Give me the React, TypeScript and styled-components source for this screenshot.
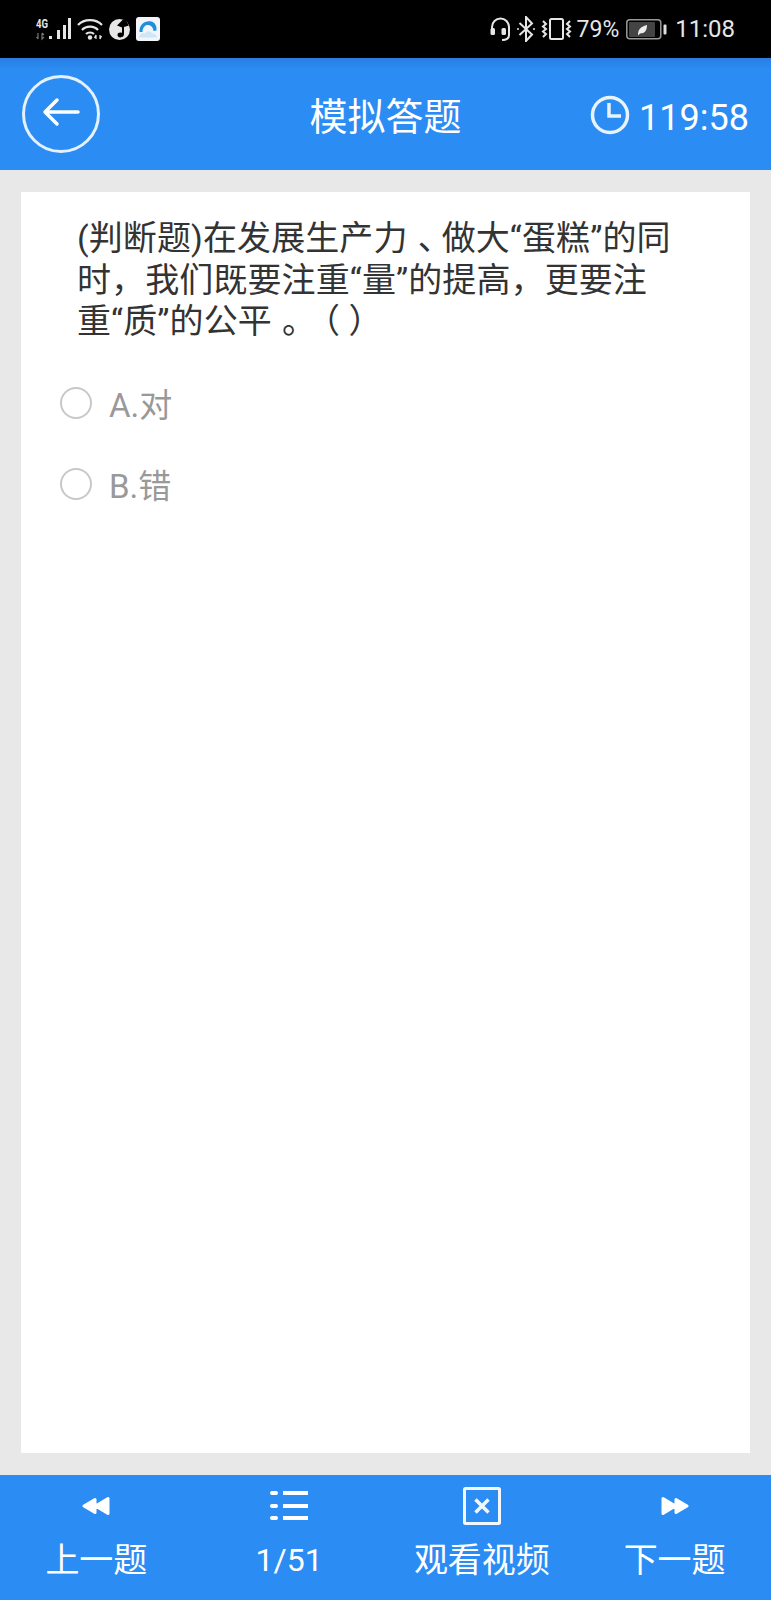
import styled, { createGlobalStyle } from "styled-components";

const BLUE = "#2b8cf3";
const CJK = `Roboto, "Noto Sans CJK SC", sans-serif`;

const GlobalStyle = createGlobalStyle`
  html, body {
    margin: 0;
    padding: 0;
    background: #e8e8e8;
    font-family: ${CJK};
  }
  * {
    box-sizing: border-box;
  }
`;

const Page = styled.div`
  width: 771px;
  height: 1600px;
  display: flex;
  flex-direction: column;
`;

const StatusBar = styled.div`
  height: 58px;
  flex: none;
  background: #000;
  color: #e6e6e6;
  display: flex;
  align-items: center;
  justify-content: space-between;
  padding: 0 36px 0 36px;
`;

const StatusGroup = styled.div`
  display: flex;
  align-items: center;
  gap: 6px;
`;

const Percent = styled.span`
  font-size: 23px;
  margin: 0 1px 0 -1px;
`;

const Clock = styled.span`
  font-size: 24px;
  margin-left: 2px;
`;

const Header = styled.header`
  height: 112px;
  flex: none;
  background: linear-gradient(#2a7ee2, ${BLUE} 12px);
  color: #fff;
  display: grid;
  grid-template-columns: 1fr auto 1fr;
  align-items: center;
  padding: 0 22px;
`;

const BackButton = styled.button`
  width: 78px;
  height: 78px;
  padding: 0 0 4px;
  border: 3px solid #e4f1fe;
  border-radius: 50%;
  background: none;
  color: #fff;
  display: flex;
  align-items: center;
  justify-content: center;
`;

const Title = styled.h1`
  margin: 0;
  padding-top: 6px;
  font-size: 38px;
  line-height: 1;
  font-weight: 400;
`;

const Timer = styled.div`
  justify-self: end;
  display: flex;
  align-items: center;
  gap: 9px;
  font-size: 36px;
  padding-top: 2px;
`;

const TimerText = styled.span`
  padding-top: 5px;
`;

const Body = styled.main`
  flex: 1;
  display: flex;
  padding: 22px 21px;
  min-height: 0;
`;

const Card = styled.section`
  flex: 1;
  background: #fff;
  padding: 26px 56px;
`;

const Question = styled.p`
  margin: 0 0 20px;
  color: #333;
  font-size: 34px;
  line-height: 41.500px;
  letter-spacing: 0.1px;
  text-spacing-trim: space-all;
`;

/* the 、 and 。 sit in the middle of their em box on the device */
const CenteredMark = styled.span`
  font-feature-settings: "halt";
  padding: 0 0.2em 0 0.3em;
`;

const Option = styled.label`
  height: 81px;
  margin-left: -17px;
  display: flex;
  align-items: center;
  gap: 17px;
  color: #999;
  font-size: 33px;
`;

const Radio = styled.span`
  width: 32px;
  height: 32px;
  flex: none;
  border: 2px solid #c8c8c8;
  border-radius: 50%;
  margin-top: -1px;
`;

const Footer = styled.footer`
  height: 125px;
  flex: none;
  background: ${BLUE};
  color: #fff;
  display: grid;
  grid-template-columns: repeat(4, 1fr);
`;

const FooterItem = styled.div`
  display: flex;
  flex-direction: column;
  align-items: center;
  padding-top: 11px;
`;

const FooterIcon = styled.div`
  height: 40px;
  display: flex;
  align-items: center;
  justify-content: center;
`;

const FooterLabel = styled.span<{ $small?: boolean }>`
  margin-top: 12px;
  font-size: ${(props) => (props.$small ? "32px" : "34px")};
  line-height: 44px;
  white-space: nowrap;
`;

const Signal = () => (
  <svg width="35" height="24" viewBox="0 0 35 24" fill="#e6e6e6">
    <rect x="13" y="19" width="3" height="3" />
    <rect x="21" y="13" width="3" height="9" />
    <rect x="27" y="8" width="3" height="14" />
    <rect x="32" y="1" width="3" height="21" />
    <text x="0" y="11" fontSize="13" fontWeight="700" fontFamily="Roboto" textLength="12" lengthAdjust="spacingAndGlyphs">
      4G
    </text>
    <path d="M2 16v6M0.500 20l1.500 2M6 16v6l2-2M6 16l2 2" fill="none" stroke="#777" strokeWidth="1.200" />
  </svg>
);

const Wifi = () => (
  <svg width="26" height="24" viewBox="0 0 26 24" fill="none" stroke="#e6e6e6" strokeWidth="2.200">
    <path d="M1 8C7 1.500 19 1.500 25 8" />
    <path d="M5 13C9 8.500 17 8.500 21 13" />
    <path d="M9 17c2-2 6-2 8 0" />
    <circle cx="13" cy="20.500" r="2.200" fill="#e6e6e6" stroke="none" />
    <path d="M19 22v-4l-1.500 3M23 18v4l1.500-3" strokeWidth="1.200" />
  </svg>
);

const Globe = () => (
  <svg width="21" height="21" viewBox="0 0 21 21">
    <circle cx="10.500" cy="10.500" r="10.500" fill="#e6e6e6" />
    <path d="M14 0.500 8 6.500l5 2v5.500c-1.500-1-4.500-.5-4.500 2S12 19.500 14.500 17c.5-1 .5-2 .5-3V8l5-1.500-3-5z" fill="#000" />
  </svg>
);

const CloudApp = () => (
  <svg width="24" height="24" viewBox="0 0 24 24">
    <rect width="24" height="24" rx="3" fill="#f2f6fa" />
    <path d="M3.500 15C3 6.500 10 3 15.500 4.500c3.500 1 5.500 4.500 5 9l-3 .5C17 8.500 11.500 6.500 8.500 9.500 7 11 6.500 13 6.500 15z" fill="#1f8fdc" />
    <path d="M3 20.500c0-4 4-5 6-4 1-3 6-3 7 0 2 0 5 1 5 4z" fill="#cfe6f7" />
  </svg>
);

const Headset = () => (
  <svg width="21" height="24" viewBox="0 0 21 24" fill="none" stroke="#e6e6e6" strokeWidth="2">
    <path d="M2 13V10a8.500 8.500 0 0 1 17 0v8c0 3-2 5-7 5" />
    <rect x="0.500" y="11" width="4.500" height="7" rx="1.500" fill="#e6e6e6" stroke="none" />
    <rect x="11.500" y="11" width="4.500" height="7" rx="1.500" fill="#e6e6e6" stroke="none" />
  </svg>
);

const Bluetooth = () => (
  <svg width="18" height="26" viewBox="0 0 18 26" fill="none" stroke="#e6e6e6" strokeWidth="2">
    <path d="M2.500 7 15 18.500 9 25V1l6 6.500L2.500 19" />
    <circle cx="1" cy="13" r="1" fill="#e6e6e6" stroke="none" />
    <circle cx="17" cy="13" r="1" fill="#e6e6e6" stroke="none" />
  </svg>
);

const Vibrate = () => (
  <svg width="31" height="22" viewBox="0 0 31 22" fill="none" stroke="#e6e6e6" strokeWidth="2">
    <rect x="9" y="1" width="13" height="20" rx="1.500" />
    <path d="M2 3l3 3-3 2.500 3 2.500-3 2.500 3 2.500-3 3M29 3l-3 3 3 2.500-3 2.500 3 2.500-3 2.500 3 3" />
  </svg>
);

const Battery = () => (
  <svg width="41" height="21" viewBox="0 0 41 21">
    <rect x="0.800" y="0.800" width="34" height="19" rx="3" fill="none" stroke="#999" strokeWidth="1.500" />
    <rect x="3" y="3" width="26" height="15" rx="1" fill="#444" />
    <rect x="37.500" y="5.500" width="3" height="10" rx="1" fill="#ddd" />
    <path d="M12 15.500c0-6 4-8 9-9.500 0 5-2 8.500-7 8.500l-2 2z" fill="#eee" />
  </svg>
);

const BackArrow = () => (
  <svg width="38" height="30" viewBox="0 0 38 30" fill="none" stroke="#fff" strokeWidth="3.500" strokeLinecap="round" strokeLinejoin="round">
    <path d="M36 15H3M15 3 3 15l12 12" />
  </svg>
);

const TimerIcon = () => (
  <svg width="40" height="40" viewBox="0 0 40 40" fill="none" stroke="#e8f3fe" strokeWidth="3.500">
    <circle cx="20" cy="20" r="17.500" />
    <path d="M19 8v13h12" />
  </svg>
);

const Rewind = ({ flip }: { flip?: boolean }) => (
  <svg
    width="28"
    height="20"
    viewBox="0 0 28 20"
    fill="#fff"
    stroke="#fff"
    strokeWidth="3"
    strokeLinejoin="round"
    transform={flip ? "scale(-1 1)" : undefined}
  >
    <path d="M2 10 13 3.500v13zM13.500 10 26 2.500v15z" />
  </svg>
);

const ListIcon = () => (
  <svg width="38" height="34" viewBox="0 0 38 34" fill="#fff">
    <rect x="0" y="2" width="8" height="4" rx="2" />
    <rect x="0" y="15" width="8" height="4" rx="2" />
    <rect x="0" y="27" width="8" height="4" rx="2" />
    <rect x="13" y="2" width="25" height="4" />
    <rect x="13" y="15" width="25" height="4" />
    <rect x="13" y="27" width="25" height="4" />
  </svg>
);

const VideoIcon = () => (
  <svg width="38" height="38" viewBox="0 0 38 38" fill="none" stroke="#f2f8ff">
    <rect x="1.500" y="1.500" width="35" height="35" rx="1" strokeWidth="3" />
    <path d="M12.500 12.500l13 13M25.500 12.500l-13 13" strokeWidth="3.500" />
  </svg>
);

const App = () => {
  return (
    <Page>
      <GlobalStyle />
      <StatusBar>
        <StatusGroup>
          <Signal />
          <Wifi />
          <Globe />
          <CloudApp />
        </StatusGroup>
        <StatusGroup>
          <Headset />
          <Bluetooth />
          <Vibrate />
          <Percent>79%</Percent>
          <Battery />
          <Clock>11:08</Clock>
        </StatusGroup>
      </StatusBar>
      <Header>
        <BackButton aria-label="返回">
          <BackArrow />
        </BackButton>
        <Title>模拟答题</Title>
        <Timer>
          <TimerIcon />
          <TimerText>119:58</TimerText>
        </Timer>
      </Header>
      <Body>
        <Card>
          <Question>
            (判断题)在发展生产力<CenteredMark>、</CenteredMark>做大“蛋糕”的同时，我们既要注重“量”的提高，更要注重“质”的公平<CenteredMark>。</CenteredMark>（ ）
          </Question>
          <Option>
            <Radio />
            A.对
          </Option>
          <Option>
            <Radio />
            B.错
          </Option>
        </Card>
      </Body>
      <Footer>
        <FooterItem>
          <FooterIcon>
            <Rewind />
          </FooterIcon>
          <FooterLabel>上一题</FooterLabel>
        </FooterItem>
        <FooterItem>
          <FooterIcon>
            <ListIcon />
          </FooterIcon>
          <FooterLabel $small>1/51</FooterLabel>
        </FooterItem>
        <FooterItem>
          <FooterIcon>
            <VideoIcon />
          </FooterIcon>
          <FooterLabel>观看视频</FooterLabel>
        </FooterItem>
        <FooterItem>
          <FooterIcon>
            <Rewind flip />
          </FooterIcon>
          <FooterLabel>下一题</FooterLabel>
        </FooterItem>
      </Footer>
    </Page>
  );
};

export default App;
